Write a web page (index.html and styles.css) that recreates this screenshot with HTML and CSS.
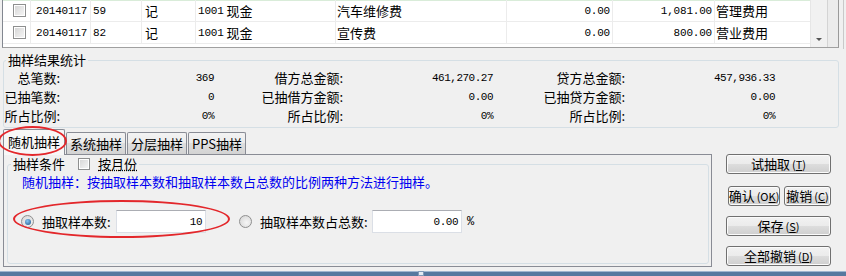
FILE: index.html
```html
<!DOCTYPE html>
<html lang="zh-CN">
<head>
<meta charset="utf-8">
<title>抽样</title>
<link rel="stylesheet" href="styles.css">
</head>
<body>
<div class="app">
  <div class="gridbar">
    <div class="grid">
      <div class="rows">
        <div class="row first">
          <div class="c c-chk"><span class="chk"></span></div>
          <div class="c c-date num">20140117</div>
          <div class="c c-no num">59</div>
          <div class="c c-type">记</div>
          <div class="c c-acct"><span class="num">1001</span>&nbsp;现金</div>
          <div class="c c-sum">汽车维修费</div>
          <div class="c c-amt num">0.00</div>
          <div class="c c-amt num">1,081.00</div>
          <div class="c c-subj">管理费用</div>
        </div>
        <div class="row">
          <div class="c c-chk"><span class="chk"></span></div>
          <div class="c c-date num">20140117</div>
          <div class="c c-no num">82</div>
          <div class="c c-type">记</div>
          <div class="c c-acct"><span class="num">1001</span>&nbsp;现金</div>
          <div class="c c-sum">宣传费</div>
          <div class="c c-amt num">0.00</div>
          <div class="c c-amt num">800.00</div>
          <div class="c c-subj">营业费用</div>
        </div>
      </div>
      <div class="vscroll"><span class="down"></span></div>
      <div class="fill"></div>
    </div>
    <div class="edge"></div>
  </div>

  <div class="group stats">
    <div class="group-title">抽样结果统计</div>
    <div class="stat-grid">
      <span>总笔数:</span><span class="num">369</span>
      <span>借方总金额:</span><span class="num">461,270.27</span>
      <span>贷方总金额:</span><span class="num">457,936.33</span>
      <span>已抽笔数:</span><span class="num">0</span>
      <span>已抽借方金额:</span><span class="num">0.00</span>
      <span>已抽贷方金额:</span><span class="num">0.00</span>
      <span>所占比例:</span><span class="num">0%</span>
      <span>所占比例:</span><span class="num">0%</span>
      <span>所占比例:</span><span class="num">0%</span>
    </div>
  </div>

  <div class="lower">
    <div class="tabctl">
      <div class="tabs">
        <div class="tab active">随机抽样</div>
        <div class="tab">系统抽样</div>
        <div class="tab">分层抽样</div>
        <div class="tab">PPS抽样</div>
      </div>
      <div class="tabpanel">
        <div class="group cond">
          <div class="group-title cond-title">
            <span>抽样条件</span>
            <span class="chk"></span>
            <span class="focus">按月份</span>
          </div>
          <div class="hint">随机抽样：按抽取样本数和抽取样本数占总数的比例两种方法进行抽样。</div>
          <div class="radio-row">
            <span class="radio on"></span>
            <span class="rlabel rl1">抽取样本数:</span>
            <span class="input num">10</span>
            <span class="radio r2"></span>
            <span class="rlabel rl2">抽取样本数占总数:</span>
            <span class="input num">0.00</span>
            <span class="pct num">%</span>
          </div>
        </div>
      </div>
    </div>
    <div class="buttons">
      <button class="btn">试抽取<span class="k">(<u>T</u>)</span></button>
      <div class="btn-pair">
        <button class="btn b-ok">确认<span class="k">(O<u>K</u>)</span></button>
        <button class="btn b-cancel">撤销<span class="k">(<u>C</u>)</span></button>
      </div>
      <button class="btn">保存<span class="k">(<u>S</u>)</span></button>
      <button class="btn">全部撤销<span class="k">(<u>D</u>)</span></button>
    </div>
  </div>

  <div class="frame"><span class="handle"></span></div>

  <div class="mark mark-tab"></div>
  <div class="mark mark-radio"></div>
</div>
</body>
</html>
```

FILE: styles.css
```css
* { box-sizing: border-box; margin: 0; padding: 0; }
html, body { width: 846px; height: 276px; overflow: hidden; }
body {
  background: #f0f0f0;
  font-family: "Noto Sans CJK SC", "Noto Sans", sans-serif;
  font-size: 13px;
  line-height: 14px;
  color: #000;
}
.app {
  position: relative;
  width: 846px;
  height: 276px;
  display: flex;
  flex-direction: column;
}
.num {
  font-family: "Liberation Mono", "DejaVu Sans Mono", monospace;
  font-size: 11px;
  letter-spacing: -0.5px;
}

/* ---------- top grid ---------- */
.gridbar {
  display: flex;
  height: 49px;
  padding-left: 2px;
}
.grid {
  display: flex;
  width: 837px;
  height: 48px;
  background: #fff;
  border-left: 1px solid #828790;
  border-right: 1px solid #9a9a9a;
  border-bottom: 1px solid #a0a0a0;
}
.edge {
  width: 1px;
  margin-left: 4px;
  background: #c9c9c9;
}
.rows { width: 807px; }
.row {
  display: grid;
  grid-template-columns: 28px 60px 51px 54px 140px 171px 106px 102px 95px;
  height: 22px;
  border-bottom: 1px solid #ececec;
}
.row.first { box-shadow: inset 0 1px 0 #d9ecd9; }
.c {
  display: flex;
  align-items: center;
  border-right: 1px solid #ececec;
  white-space: nowrap;
  overflow: hidden;
}
.row .num { font-size: 11px; letter-spacing: -0.2px; }
.c-chk { padding-left: 10px; }
.c-date { padding-left: 5px; }
.c-no { padding-left: 2px; }
.c-type { padding-left: 3px; }
.c-acct { padding-left: 2px; }
.c-sum { padding-left: 1px; }
.c-amt { justify-content: flex-end; padding-right: 2px; }
.c-subj { padding-left: 1px; border-right: none; }

.chk {
  display: inline-block;
  width: 13px;
  height: 13px;
  border: 1px solid #8e8f8f;
  background: linear-gradient(135deg, #d4d4d4, #f7f7f7);
  box-shadow: inset 0 0 0 1px #fff;
  flex: none;
}

.vscroll {
  width: 18px;
  background: #f1f1f1;
  border-left: 1px solid #e6e6e6;
  border-right: 1px solid #d4d4d4;
  display: flex;
  flex-direction: column;
  justify-content: flex-end;
  align-items: center;
  padding-bottom: 6px;
}
.down {
  width: 0;
  height: 0;
  border-left: 3px solid transparent;
  border-right: 3px solid transparent;
  border-top: 3px solid #555;
}
.fill {
  width: 10px;
  background: #ececec;
}

/* ---------- group boxes ---------- */
.group {
  border: 1px solid #d5dfe5;
  border-radius: 3px;
}
.group-title {
  display: flex;
  align-items: center;
  width: max-content;
  height: 14px;
  line-height: 14px;
  margin: -8px 0 0 2px;
  padding: 0 2px;
  background: #f0f0f0;
}

.stats {
  margin: 11px 7px 0 3px;
}
.stat-grid {
  display: grid;
  grid-template-columns: 56px 154px 129px 150px 132px 150px;
  grid-auto-rows: 19px;
  align-items: center;
  justify-items: end;
  margin-top: 1px;
  padding-bottom: 2px;
}

/* ---------- lower: tabs + buttons ---------- */
.lower {
  display: flex;
  height: 138px;
  margin-top: 1px;
}
.tabctl {
  width: 709px;
  margin-left: 3px;
  display: flex;
  flex-direction: column;
}
.tabs {
  display: flex;
  align-items: flex-end;
  height: 25px;
}
.tab {
  height: 22px;
  display: flex;
  align-items: center;
  padding: 0 3px;
  margin-left: 1px;
  border: 1px solid #898c95;
  border-bottom: none;
  border-radius: 2px 2px 0 0;
  background: linear-gradient(#f3f3f3 0, #ebebeb 50%, #dedede 50%, #d3d3d3 100%);
  white-space: nowrap;
}
.tab.active {
  height: 26px;
  margin-left: 0;
  margin-bottom: -1px;
  padding: 0 4px 2px;
  background: #f7f7f7;
  position: relative;
  z-index: 1;
}
.tabpanel {
  height: 113px;
  border: 1px solid #898c95;
  background: #f0f0f0;
  padding: 0 2px 1px 3px;
}
.cond {
  margin-top: 9px;
  height: 100px;
}
.cond-title { margin-left: 3px; }
.cond-title .chk { margin-left: 13px; width: 12px; height: 12px; }
.focus {
  margin-left: 8px;
  text-decoration: underline;
  text-decoration-style: dotted;
  text-underline-offset: 1px;
}
.hint {
  margin-top: 4px;
  padding-left: 14px;
  color: #0000f0;
  white-space: nowrap;
}
.radio-row {
  display: flex;
  align-items: center;
  height: 23px;
  margin-top: 21px;
  padding-left: 13px;
}
.radio {
  width: 13px;
  height: 13px;
  border-radius: 50%;
  border: 1px solid #8f8f8f;
  background: radial-gradient(circle at 60% 60%, #f6f6f6, #d2d2d2);
  display: flex;
  align-items: center;
  justify-content: center;
  flex: none;
}
.radio.on::after {
  content: "";
  width: 6px;
  height: 6px;
  border-radius: 50%;
  background: radial-gradient(circle at 40% 35%, #86c8f4, #1b4f87);
}
.r2 { margin-left: 33px; }
.rlabel { margin-left: 8px; white-space: nowrap; }
.rl1 { width: 74px; }
.rl2 { width: 112px; }
.input {
  width: 90px;
  height: 23px;
  background: #fff;
  border: 1px solid #dbdfe6;
  border-top-color: #abadb3;
  display: flex;
  align-items: center;
  justify-content: flex-end;
  padding-right: 3px;
}
.pct { margin-left: 5px; font-size: 12px; }

.buttons {
  width: 105px;
  margin-left: 14px;
  padding-top: 25px;
  display: flex;
  flex-direction: column;
}
.btn {
  height: 20px;
  width: 105px;
  border: 1px solid #707070;
  border-radius: 3px;
  background: linear-gradient(#f2f2f2 0, #ebebeb 50%, #dddddd 50%, #cfcfcf 100%);
  box-shadow: inset 0 0 0 1px #fbfbfb;
  font-family: inherit;
  font-size: 13px;
  line-height: 14px;
  color: #000;
  display: flex;
  align-items: center;
  justify-content: center;
  white-space: nowrap;
}
.btn .k { font-size: 11px; margin-left: 2px; }
.btn-pair {
  display: flex;
  gap: 4px;
  padding-left: 2px;
  margin-top: 12px;
}
.b-ok { width: 52px; }
.b-cancel { width: 47px; }
.buttons > .btn + .btn,
.btn-pair + .btn { margin-top: 10px; }

/* ---------- window frame ---------- */
.frame {
  margin-top: 4px;
  height: 5px;
  background: #56799f;
  border-top: 1px solid #9fb6cf;
  display: flex;
  padding-left: 418px;
}
.handle {
  width: 6px;
  height: 5px;
  margin-top: -1px;
  background: #e3ebf3;
  border: 1px solid #7f9ab8;
}

/* ---------- red annotation ellipses ---------- */
.mark {
  position: absolute;
  z-index: 10;
  border: 2px solid #e3272b;
  border-radius: 50%;
  pointer-events: none;
}
.mark-tab { left: -2px; top: 126px; width: 69px; height: 30px; }
.mark-radio { left: 13px; top: 200px; width: 217px; height: 38px; }
```
